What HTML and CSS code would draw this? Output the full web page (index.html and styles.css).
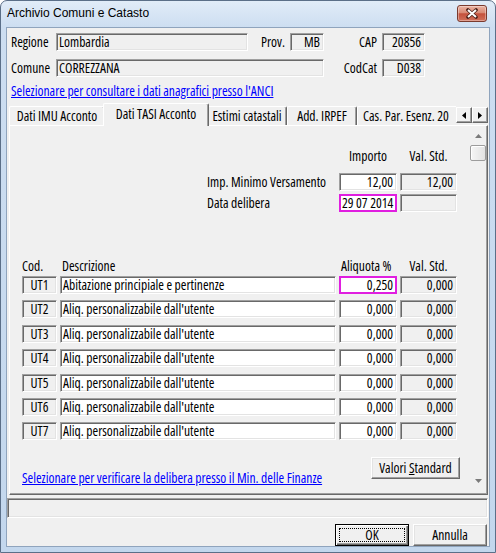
FILE: index.html
```html
<!DOCTYPE html>
<html lang="it">
<head>
<meta charset="utf-8">
<title>Archivio Comuni e Catasto</title>
<link rel="stylesheet" href="styles.css">
</head>
<body>
<div class="window">
  <div class="titlebar">
    <span class="title">Archivio Comuni e Catasto</span>
    <span class="close">
      <svg width="14" height="11" viewBox="0 0 14 11"><path d="M3 2 L11 9 M11 2 L3 9" stroke="#4a2018" stroke-width="3.6" stroke-linecap="round"/><path d="M3 2 L11 9 M11 2 L3 9" stroke="#fff" stroke-width="2"/></svg>
    </span>
  </div>
  <div class="client">
    <div class="hdr">
      <span class="lbl">Regione</span>
      <div class="fld ro">Lombardia</div>
      <span class="lbl r">Prov.</span>
      <div class="fld ro num">MB</div>
      <span class="lbl r">CAP</span>
      <div class="fld ro num">20856</div>
      <span class="lbl">Comune</span>
      <div class="fld ro span3">CORREZZANA</div>
      <span class="lbl r">CodCat</span>
      <div class="fld ro num">D038</div>
    </div>
    <div class="toplink"><a class="link">Selezionare per consultare i dati anagrafici presso l'ANCI</a></div>
    <div class="tabstrip">
      <div class="tabs">
        <div class="tab w1">Dati IMU Acconto</div>
        <div class="tab sel w2">Dati TASI Acconto</div>
        <div class="tab w3">Estimi catastali</div>
        <div class="tab w4">Add. IRPEF</div>
        <div class="tab w5">Cas. Par. Esenz. 20</div>
      </div>
      <div class="tabarrows">
        <span class="abtn"><svg width="4" height="7" viewBox="0 0 4 7"><path d="M4 0 L0 3.5 L4 7 Z" fill="#000"/></svg></span>
        <span class="abtn"><svg width="4" height="7" viewBox="0 0 4 7"><path d="M0 0 L4 3.5 L0 7 Z" fill="#000"/></svg></span>
      </div>
    </div>
    <div class="pane">
      <div class="content">
        <div class="topgrid">
          <span></span><span></span>
          <span class="colhead">Importo</span>
          <span class="colhead">Val. Std.</span>
        </div>
        <div class="topgrid rows">
          <span></span>
          <span class="lbl">Imp. Minimo Versamento</span>
          <div class="fld num">12,00</div>
          <div class="fld ro num">12,00</div>
          <span></span>
          <span class="lbl">Data delibera</span>
          <div class="fld hl">29 07 2014</div>
          <div class="fld ro"></div>
        </div>
        <div class="thead">
          <span>Cod.</span>
          <span class="pl">Descrizione</span>
          <span class="pl">Aliquota %</span>
          <span class="colhead">Val. Std.</span>
        </div>
        <div class="tbody">
          <div class="fld ro ctr">UT1</div><div class="fld">Abitazione principiale e pertinenze</div><div class="fld num hl">0,250</div><div class="fld ro num">0,000</div>
          <div class="fld ro ctr">UT2</div><div class="fld">Aliq. personalizzabile dall'utente</div><div class="fld num">0,000</div><div class="fld ro num">0,000</div>
          <div class="fld ro ctr">UT3</div><div class="fld">Aliq. personalizzabile dall'utente</div><div class="fld num">0,000</div><div class="fld ro num">0,000</div>
          <div class="fld ro ctr">UT4</div><div class="fld">Aliq. personalizzabile dall'utente</div><div class="fld num">0,000</div><div class="fld ro num">0,000</div>
          <div class="fld ro ctr">UT5</div><div class="fld">Aliq. personalizzabile dall'utente</div><div class="fld num">0,000</div><div class="fld ro num">0,000</div>
          <div class="fld ro ctr">UT6</div><div class="fld">Aliq. personalizzabile dall'utente</div><div class="fld num">0,000</div><div class="fld ro num">0,000</div>
          <div class="fld ro ctr">UT7</div><div class="fld">Aliq. personalizzabile dall'utente</div><div class="fld num">0,000</div><div class="fld ro num">0,000</div>
        </div>
        <div class="bottomrow">
          <a class="link botlink">Selezionare per verificare la delibera presso il Min. delle Finanze</a>
          <span class="btn vsbtn">Valori&nbsp;<u>S</u>tandard</span>
        </div>
      </div>
      <div class="vscroll">
        <span class="sarrow"><svg width="7" height="4" viewBox="0 0 7 4"><path d="M0 4 L3.5 0 L7 4 Z" fill="#7a7a7a"/></svg></span>
        <span class="thumb"></span>
        <span class="sfill"></span>
        <span class="sarrow down"><svg width="7" height="4" viewBox="0 0 7 4"><path d="M0 0 L3.5 4 L7 0 Z" fill="#7a7a7a"/></svg></span>
      </div>
    </div>
    <div class="fld ro status"></div>
    <div class="buttons">
      <span class="btn default"><span class="focus">OK</span></span>
      <span class="btn">Annulla</span>
    </div>
  </div>
</div>
</body>
</html>
```
FILE: styles.css
```css
body {
  margin: 0;
  background: #fff;
}

.window {
  width: 496px;
  height: 553px;
  box-sizing: border-box;
  border: 1px solid #5b6f88;
  border-radius: 7px 7px 0 0;
  background: linear-gradient(to bottom, #e1ecf8 0, #cddef1 26px, #c3d7ed 100%);
  display: flex;
  flex-direction: column;
  overflow: hidden;
  font-family: "Open Sans", "Liberation Sans", sans-serif;
  font-size: 13.6px;
  line-height: 14px;
  font-stretch: 75%;
  color: #000;
}

.titlebar {
  height: 27px;
  box-sizing: border-box;
  display: flex;
  align-items: flex-start;
  padding: 4px 8px 0 6px;
}

.title {
  font-family: "Liberation Sans", Arial, sans-serif;
  font-size: 12px;
  line-height: 17px;
  font-stretch: normal;
  color: #000;
}

.close {
  margin-left: auto;
  width: 30px;
  height: 17px;
  box-sizing: border-box;
  border: 1px solid #7a3a2e;
  border-radius: 3px;
  background: linear-gradient(to bottom, #eab3a3 0, #d98a75 45%, #c4513c 52%, #d0705a 100%);
  box-shadow: inset 0 0 0 1px rgba(255, 255, 255, 0.35);
  display: flex;
  align-items: center;
  justify-content: center;
}

.client {
  flex: 1;
  margin: 0 6px 6px 6px;
  background: #f0f0f0;
  box-shadow: 0 0 0 1px #8fa4bd;
  display: flex;
  flex-direction: column;
  padding-top: 5px;
  min-height: 0;
}

.hdr {
  display: grid;
  grid-template-columns: 45px 192px 42px 34px 58px 43px;
  grid-template-rows: 18px 18px;
  row-gap: 8px;
  padding-left: 4px;
  align-items: center;
}

.lbl {
  white-space: nowrap;
}

.lbl.r {
  text-align: right;
  padding-right: 5px;
}

.span3 {
  grid-column: span 3;
}

.fld {
  box-sizing: border-box;
  height: 18px;
  border: 1px solid;
  border-color: #a0a0a0 #ffffff #ffffff #a0a0a0;
  box-shadow: inset 1px 1px 0 #696969, inset -1px -1px 0 #e3e3e3;
  padding: 0 2px 0 2px;
  line-height: 16px;
  white-space: nowrap;
  overflow: hidden;
  background: #fff;
}

.fld.ro {
  background: #f0f0f0;
}

.fld.num {
  text-align: right;
  padding-right: 3px;
}

.fld.ctr {
  text-align: center;
}

.fld.hl {
  border: 2px solid #e01ee0;
  box-shadow: none;
  line-height: 14px;
  padding-left: 1px;
}

.fld.num.hl {
  padding-right: 2px;
}

.toplink {
  margin-top: 7px;
  padding-left: 4px;
  line-height: 14px;
}

.link {
  color: #0000ff;
  text-decoration: underline;
  white-space: nowrap;
}

.tabstrip {
  display: flex;
  margin: 5px 1px -1px 2px;
  height: 23px;
  position: relative;
  z-index: 1;
}

.tabs {
  flex: 1;
  display: flex;
  align-items: flex-end;
  overflow: hidden;
  min-width: 0;
}

.tab {
  flex: none;
  box-sizing: border-box;
  height: 19px;
  margin-bottom: 1px;
  border-top: 1px solid #fff;
  border-left: 1px solid #fff;
  border-right: 1px solid #696969;
  box-shadow: inset -1px 0 0 #a0a0a0;
  border-radius: 2px 2px 0 0;
  background: #f0f0f0;
  text-align: center;
  line-height: 17px;
  white-space: nowrap;
  overflow: hidden;
}

.tab.w1 { width: 96px; }
.tab.w3 { width: 80px; }
.tab.w4 { width: 70px; }

.tab.w5 {
  flex: 1;
  text-align: left;
  padding-left: 5px;
  border-right: 0;
  box-shadow: none;
  border-radius: 2px 0 0 0;
}

.tab.sel {
  height: 23px;
  margin: 0 -2px;
  width: 106px;
  position: relative;
  z-index: 2;
  line-height: 19px;
}

.tabarrows {
  display: flex;
  margin-top: 4px;
  height: 16px;
}

.abtn {
  box-sizing: border-box;
  width: 16px;
  height: 16px;
  border: 1px solid;
  border-color: #fff #696969 #696969 #fff;
  box-shadow: inset -1px -1px 0 #a0a0a0;
  background: #f0f0f0;
  display: flex;
  align-items: center;
  justify-content: center;
}

.pane {
  flex: 1;
  min-height: 0;
  margin: 0 1px 0 2px;
  border: 1px solid;
  border-color: #fff #696969 #696969 #fff;
  box-shadow: inset -1px -1px 0 #a0a0a0;
  display: flex;
}

.content {
  flex: 1;
  padding: 23px 0 0 12px;
  display: flex;
  flex-direction: column;
  align-items: flex-start;
}

.topgrid {
  display: grid;
  grid-template-columns: 182px 129px 58px 57px;
  column-gap: 3px;
  line-height: 14px;
  white-space: nowrap;
}

.topgrid.rows {
  margin-top: 10px;
  grid-template-rows: 18px 18px;
  row-gap: 3px;
  align-items: center;
}

.colhead {
  text-align: center;
}

.thead {
  display: grid;
  grid-template-columns: 35px 276px 58px 57px;
  column-gap: 3px;
  margin-top: 47px;
  line-height: 14px;
  white-space: nowrap;
}

.pl {
  padding-left: 2px;
}

.tbody {
  display: grid;
  grid-template-columns: 35px 276px 58px 57px;
  grid-auto-rows: 18px;
  column-gap: 3px;
  row-gap: 6.4px;
  margin-top: 3px;
}

.bottomrow {
  width: 438px;
  height: 28px;
  margin-top: 16.6px;
  display: flex;
  justify-content: space-between;
}

.botlink {
  align-self: flex-end;
  line-height: 14px;
}

.btn {
  box-sizing: border-box;
  height: 22px;
  border: 1px solid;
  border-color: #fff #696969 #696969 #fff;
  box-shadow: inset -1px -1px 0 #a0a0a0, inset 1px 1px 0 #e3e3e3;
  background: #f0f0f0;
  display: flex;
  align-items: center;
  justify-content: center;
  line-height: 14px;
  white-space: nowrap;
}

.vsbtn {
  width: 89px;
  align-self: flex-start;
}

.vscroll {
  width: 18px;
  display: flex;
  flex-direction: column;
  align-items: center;
}

.sarrow {
  height: 16px;
  display: flex;
  align-items: center;
  justify-content: center;
  padding-top: 2px;
}

.sarrow.down {
  padding: 0 0 5px 0;
}

.thumb {
  box-sizing: border-box;
  margin-top: 1px;
  width: 16px;
  height: 16px;
  border: 1px solid #9c9c9c;
  border-radius: 2px;
  background: linear-gradient(to right, #f6f6f6, #e2e2e2);
  box-shadow: inset 1px 1px 0 #fff;
}

.sfill {
  flex: 1;
}

.status {
  height: 20px;
  margin: 3px 1px 0 0;
}

.buttons {
  margin: 6px 2px 0 0;
  display: flex;
  justify-content: flex-end;
  gap: 4px;
}

.buttons .btn {
  width: 74px;
}

.btn.default {
  border: 1px solid #000;
  box-shadow: inset 1px 1px 0 #fff, inset -1px -1px 0 #696969, inset -2px -2px 0 #a0a0a0;
  padding: 3px;
}

.focus {
  flex: 1;
  align-self: stretch;
  border: 1px dotted #000;
  display: flex;
  align-items: center;
  justify-content: center;
}
```
